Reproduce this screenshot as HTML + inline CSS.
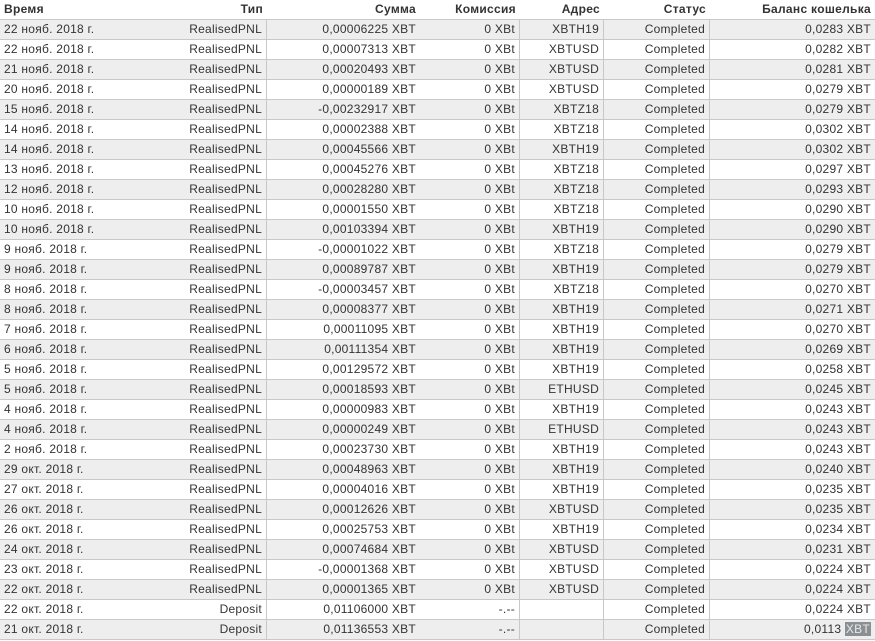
<!DOCTYPE html>
<html><head><meta charset="utf-8"><style>
body{margin:0;background:#fff;width:875px;height:641px;overflow:hidden;font-family:"Liberation Sans","DejaVu Sans",sans-serif;font-size:12px;letter-spacing:0.25px;color:#333}
.r{display:grid;grid-template-columns:148px 119px 153px 100px 84px 106px 165px;height:19px;border-bottom:1px solid #c8c8c8;line-height:19px}
.r:nth-child(even){background:#eee}
.r>div{text-align:right;padding-right:4px;white-space:nowrap;overflow:hidden}
.r>div:first-child{text-align:left;padding-left:4px;padding-right:0}
.r>div:nth-child(2),.r>div:nth-child(4),.r>div:nth-child(5),.r>div:nth-child(6){border-right:1px solid #c8c8c8}
.h{font-weight:bold;color:#333;background:#fff!important;letter-spacing:0.3px}
.h>div{border-right:none!important}
.hl{background:#8a8f94;color:#e8e8e8;padding:0 1px}
</style></head><body>
<div class="r h"><div>Время</div><div>Тип</div><div>Сумма</div><div>Комиссия</div><div>Адрес</div><div>Статус</div><div>Баланс кошелька</div></div>
<div class="r"><div>22 нояб. 2018 г.</div><div>RealisedPNL</div><div>0,00006225 XBT</div><div>0 XBt</div><div>XBTH19</div><div>Completed</div><div>0,0283 XBT</div></div>
<div class="r"><div>22 нояб. 2018 г.</div><div>RealisedPNL</div><div>0,00007313 XBT</div><div>0 XBt</div><div>XBTUSD</div><div>Completed</div><div>0,0282 XBT</div></div>
<div class="r"><div>21 нояб. 2018 г.</div><div>RealisedPNL</div><div>0,00020493 XBT</div><div>0 XBt</div><div>XBTUSD</div><div>Completed</div><div>0,0281 XBT</div></div>
<div class="r"><div>20 нояб. 2018 г.</div><div>RealisedPNL</div><div>0,00000189 XBT</div><div>0 XBt</div><div>XBTUSD</div><div>Completed</div><div>0,0279 XBT</div></div>
<div class="r"><div>15 нояб. 2018 г.</div><div>RealisedPNL</div><div>-0,00232917 XBT</div><div>0 XBt</div><div>XBTZ18</div><div>Completed</div><div>0,0279 XBT</div></div>
<div class="r"><div>14 нояб. 2018 г.</div><div>RealisedPNL</div><div>0,00002388 XBT</div><div>0 XBt</div><div>XBTZ18</div><div>Completed</div><div>0,0302 XBT</div></div>
<div class="r"><div>14 нояб. 2018 г.</div><div>RealisedPNL</div><div>0,00045566 XBT</div><div>0 XBt</div><div>XBTH19</div><div>Completed</div><div>0,0302 XBT</div></div>
<div class="r"><div>13 нояб. 2018 г.</div><div>RealisedPNL</div><div>0,00045276 XBT</div><div>0 XBt</div><div>XBTZ18</div><div>Completed</div><div>0,0297 XBT</div></div>
<div class="r"><div>12 нояб. 2018 г.</div><div>RealisedPNL</div><div>0,00028280 XBT</div><div>0 XBt</div><div>XBTZ18</div><div>Completed</div><div>0,0293 XBT</div></div>
<div class="r"><div>10 нояб. 2018 г.</div><div>RealisedPNL</div><div>0,00001550 XBT</div><div>0 XBt</div><div>XBTZ18</div><div>Completed</div><div>0,0290 XBT</div></div>
<div class="r"><div>10 нояб. 2018 г.</div><div>RealisedPNL</div><div>0,00103394 XBT</div><div>0 XBt</div><div>XBTH19</div><div>Completed</div><div>0,0290 XBT</div></div>
<div class="r"><div>9 нояб. 2018 г.</div><div>RealisedPNL</div><div>-0,00001022 XBT</div><div>0 XBt</div><div>XBTZ18</div><div>Completed</div><div>0,0279 XBT</div></div>
<div class="r"><div>9 нояб. 2018 г.</div><div>RealisedPNL</div><div>0,00089787 XBT</div><div>0 XBt</div><div>XBTH19</div><div>Completed</div><div>0,0279 XBT</div></div>
<div class="r"><div>8 нояб. 2018 г.</div><div>RealisedPNL</div><div>-0,00003457 XBT</div><div>0 XBt</div><div>XBTZ18</div><div>Completed</div><div>0,0270 XBT</div></div>
<div class="r"><div>8 нояб. 2018 г.</div><div>RealisedPNL</div><div>0,00008377 XBT</div><div>0 XBt</div><div>XBTH19</div><div>Completed</div><div>0,0271 XBT</div></div>
<div class="r"><div>7 нояб. 2018 г.</div><div>RealisedPNL</div><div>0,00011095 XBT</div><div>0 XBt</div><div>XBTH19</div><div>Completed</div><div>0,0270 XBT</div></div>
<div class="r"><div>6 нояб. 2018 г.</div><div>RealisedPNL</div><div>0,00111354 XBT</div><div>0 XBt</div><div>XBTH19</div><div>Completed</div><div>0,0269 XBT</div></div>
<div class="r"><div>5 нояб. 2018 г.</div><div>RealisedPNL</div><div>0,00129572 XBT</div><div>0 XBt</div><div>XBTH19</div><div>Completed</div><div>0,0258 XBT</div></div>
<div class="r"><div>5 нояб. 2018 г.</div><div>RealisedPNL</div><div>0,00018593 XBT</div><div>0 XBt</div><div>ETHUSD</div><div>Completed</div><div>0,0245 XBT</div></div>
<div class="r"><div>4 нояб. 2018 г.</div><div>RealisedPNL</div><div>0,00000983 XBT</div><div>0 XBt</div><div>XBTH19</div><div>Completed</div><div>0,0243 XBT</div></div>
<div class="r"><div>4 нояб. 2018 г.</div><div>RealisedPNL</div><div>0,00000249 XBT</div><div>0 XBt</div><div>ETHUSD</div><div>Completed</div><div>0,0243 XBT</div></div>
<div class="r"><div>2 нояб. 2018 г.</div><div>RealisedPNL</div><div>0,00023730 XBT</div><div>0 XBt</div><div>XBTH19</div><div>Completed</div><div>0,0243 XBT</div></div>
<div class="r"><div>29 окт. 2018 г.</div><div>RealisedPNL</div><div>0,00048963 XBT</div><div>0 XBt</div><div>XBTH19</div><div>Completed</div><div>0,0240 XBT</div></div>
<div class="r"><div>27 окт. 2018 г.</div><div>RealisedPNL</div><div>0,00004016 XBT</div><div>0 XBt</div><div>XBTH19</div><div>Completed</div><div>0,0235 XBT</div></div>
<div class="r"><div>26 окт. 2018 г.</div><div>RealisedPNL</div><div>0,00012626 XBT</div><div>0 XBt</div><div>XBTUSD</div><div>Completed</div><div>0,0235 XBT</div></div>
<div class="r"><div>26 окт. 2018 г.</div><div>RealisedPNL</div><div>0,00025753 XBT</div><div>0 XBt</div><div>XBTH19</div><div>Completed</div><div>0,0234 XBT</div></div>
<div class="r"><div>24 окт. 2018 г.</div><div>RealisedPNL</div><div>0,00074684 XBT</div><div>0 XBt</div><div>XBTUSD</div><div>Completed</div><div>0,0231 XBT</div></div>
<div class="r"><div>23 окт. 2018 г.</div><div>RealisedPNL</div><div>-0,00001368 XBT</div><div>0 XBt</div><div>XBTUSD</div><div>Completed</div><div>0,0224 XBT</div></div>
<div class="r"><div>22 окт. 2018 г.</div><div>RealisedPNL</div><div>0,00001365 XBT</div><div>0 XBt</div><div>XBTUSD</div><div>Completed</div><div>0,0224 XBT</div></div>
<div class="r"><div>22 окт. 2018 г.</div><div>Deposit</div><div>0,01106000 XBT</div><div>-.--</div><div></div><div>Completed</div><div>0,0224 XBT</div></div>
<div class="r"><div>21 окт. 2018 г.</div><div>Deposit</div><div>0,01136553 XBT</div><div>-.--</div><div></div><div>Completed</div><div>0,0113 <span class="hl">XBT</span></div></div>
</body></html>
